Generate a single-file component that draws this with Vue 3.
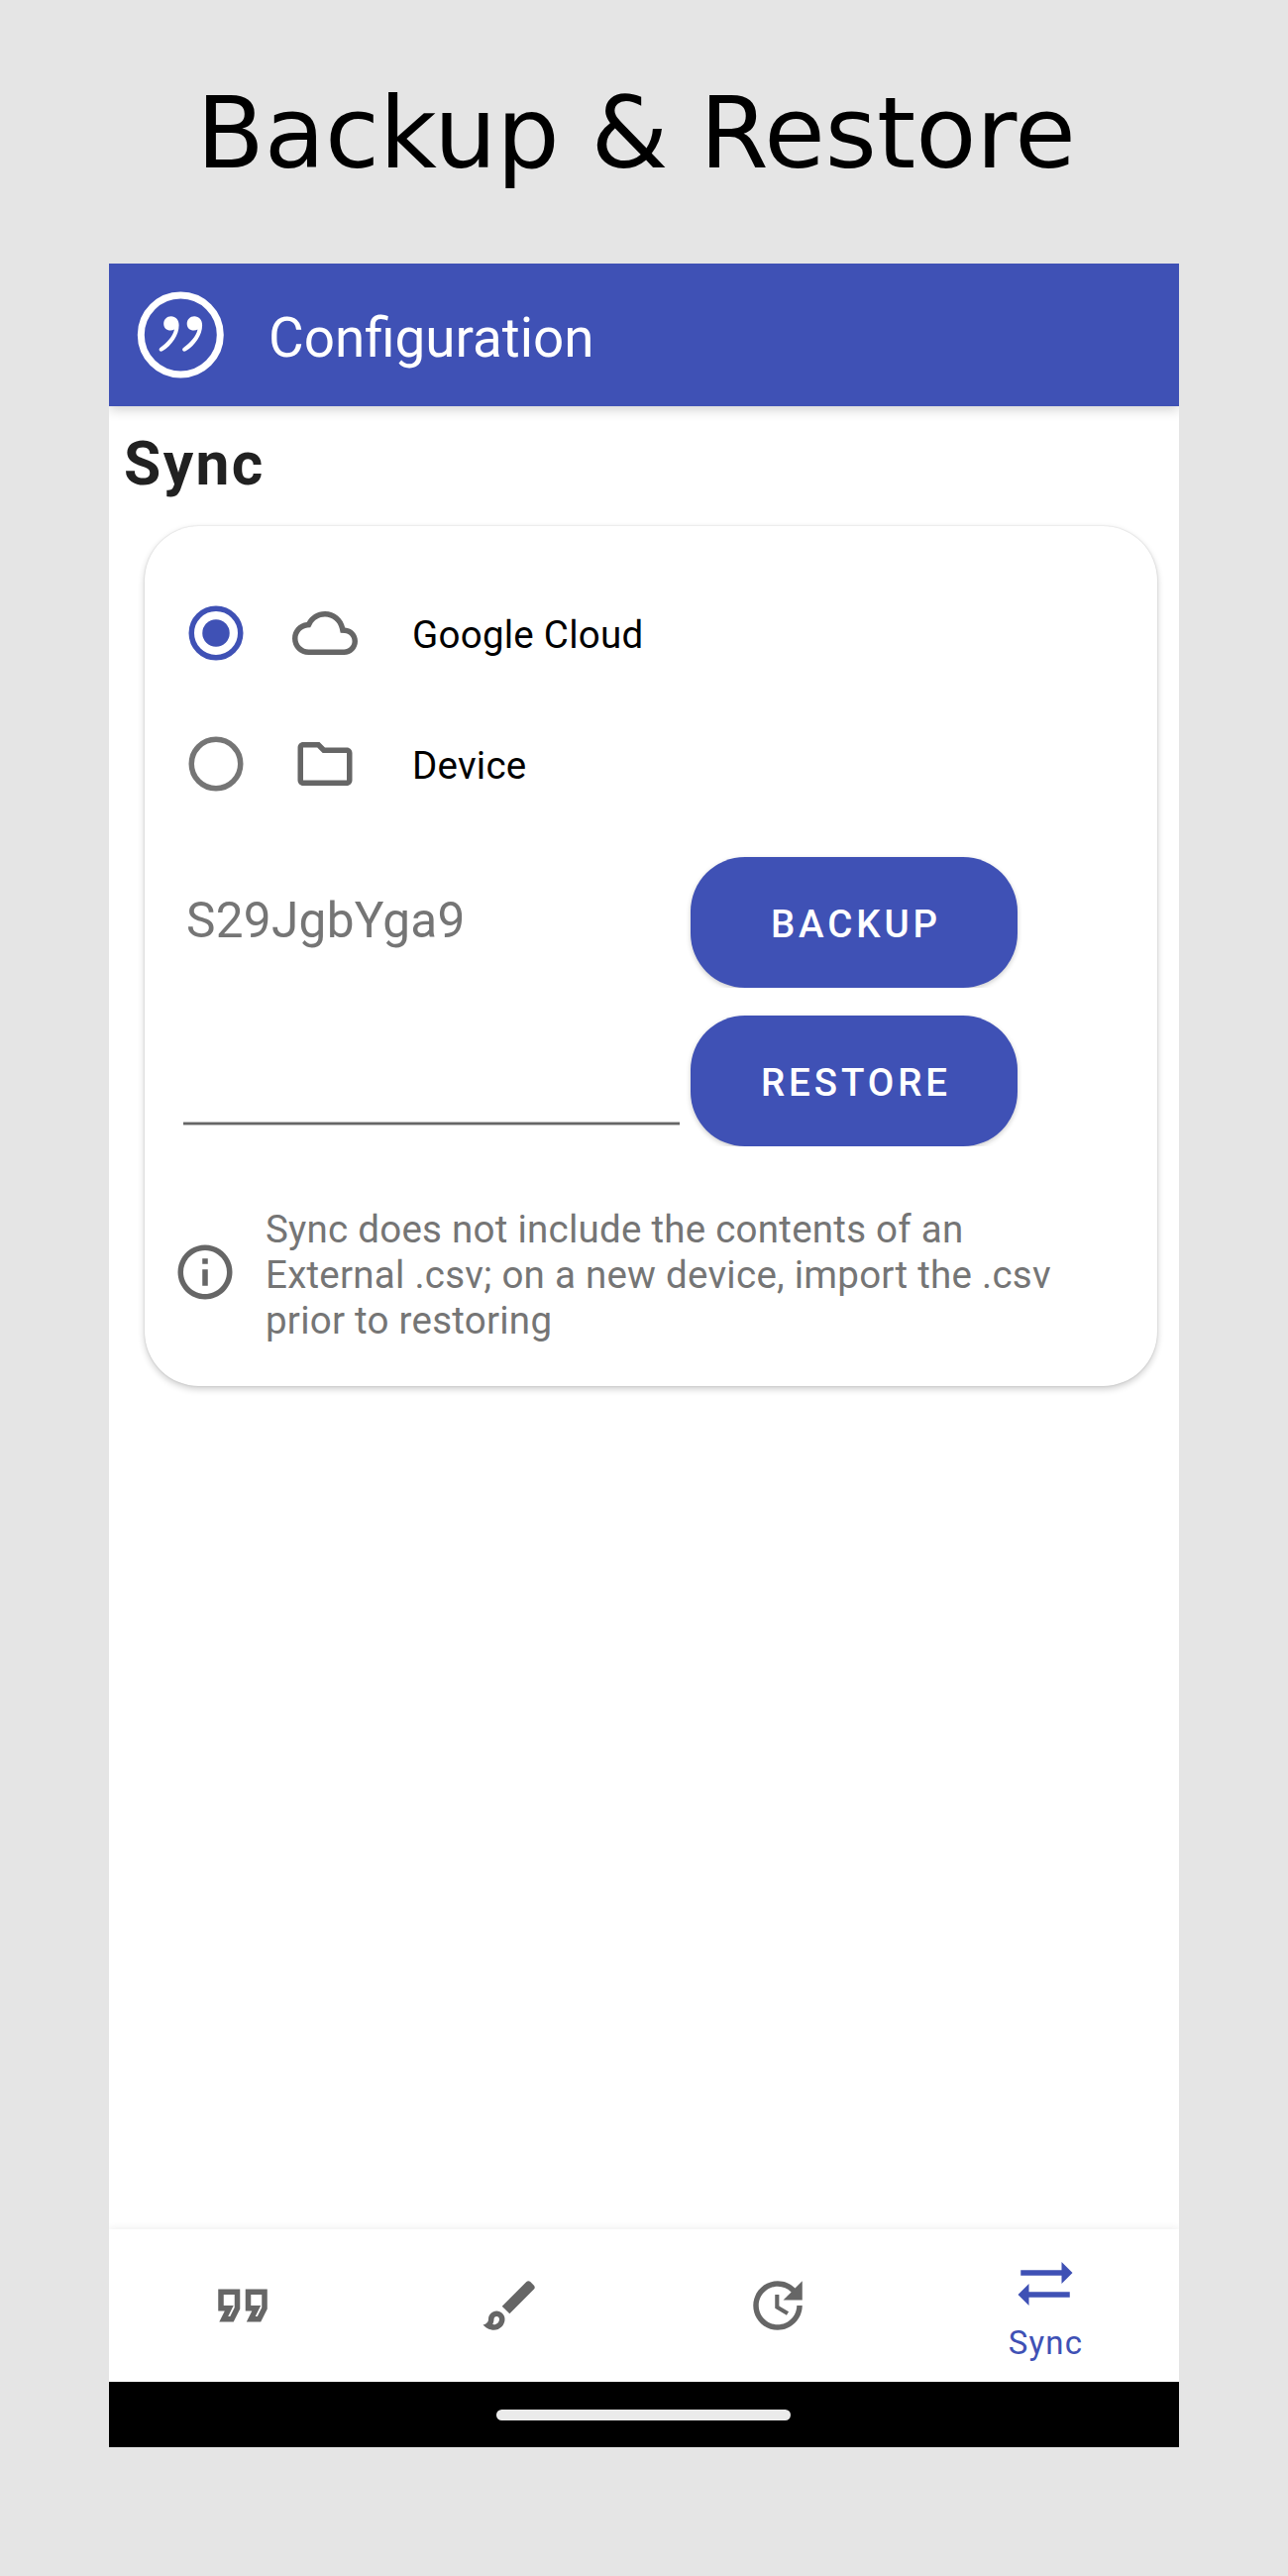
<script setup>
import { ref } from 'vue'

const target = ref('cloud')
const options = [
  {
    id: 'cloud',
    label: 'Google Cloud',
    icon: 'M19.35 10.04C18.67 6.59 15.64 4 12 4 9.11 4 6.6 5.64 5.35 8.04 2.34 8.36 0 10.91 0 14c0 3.31 2.69 6 6 6h13c2.76 0 5-2.24 5-5 0-2.64-2.05-4.78-4.65-4.96zM19 18H6c-2.21 0-4-1.79-4-4 0-2.05 1.53-3.76 3.56-3.97l1.07-.11.5-.95C8.08 7.14 9.94 6 12 6c2.62 0 4.88 1.86 5.39 4.43l.3 1.5 1.53.11c1.56.1 2.78 1.41 2.78 2.96 0 1.65-1.35 3-3 3z'
  },
  {
    id: 'device',
    label: 'Device',
    icon: 'M9.17 6l2 2H20v10H4V6h5.17M10 4H4c-1.1 0-1.99.9-1.99 2L2 18c0 1.1.9 2 2 2h16c1.1 0 2-.9 2-2V8c0-1.1-.9-2-2-2h-8l-2-2z'
  }
]

const tabs = [
  {
    id: 'quotes',
    icon: 'M18.62 18h-5.24l2-4H13V6h8v7.24L18.62 18zm-2-2h.76L19 12.76V8h-4v4h3.62l-2 4zm-8 2H3.38l2-4H3V6h8v7.24L8.62 18zm-2-2h.76L9 12.76V8H5v4h3.62l-2 4z'
  },
  {
    id: 'appearance',
    icon: 'M7 16c.55 0 1 .45 1 1 0 1.1-.9 2-2 2-.17 0-.33-.02-.5-.05.31-.55.5-1.21.5-1.95 0-.55.45-1 1-1M18.67 3c-.26 0-.51.1-.71.29L9 12.25 11.75 15l8.96-8.96c.39-.39.39-1.02 0-1.41l-1.34-1.34c-.2-.2-.45-.29-.7-.29zM7 14c-1.66 0-3 1.34-3 3 0 1.31-1.16 2-2 2 .92 1.22 2.49 2 4 2 2.21 0 4-1.79 4-4 0-1.66-1.34-3-3-3z'
  },
  {
    id: 'schedule',
    icon: 'M11 8v5l4.25 2.52.77-1.28-3.52-2.09V8zm10 2V3l-2.64 2.64C16.74 4.01 14.49 3 12 3c-4.97 0-9 4.03-9 9s4.03 9 9 9 9-4.03 9-9h-2c0 3.86-3.14 7-7 7s-7-3.14-7-7 3.14-7 7-7c1.93 0 3.68.79 4.95 2.05L14 10h7z'
  },
  {
    id: 'sync',
    label: 'Sync',
    icon: 'M22 8l-4-4v3H3v2h15v3l4-4zM2 16l4 4v-3h15v-2H6v-3l-4 4z'
  }
]

const mark =
  'M52.6 39.2c4.8 0 8 3.6 8 9 0 10-7 20.2-16.6 26-2.8 1.5-4.6-1.3-2.4-3.1C48.5 66 54.4 60 56 52.6c-1.2.7-2.4 1-3.8 1-4.2 0-7-3-7-6.9 0-4.3 3.2-7.5 7.4-7.5z'
</script>

<template>
  <div class="page">
    <h1 class="title">Backup &amp; Restore</h1>
    <div class="phone">
      <header class="appbar">
        <svg class="logo" viewBox="14 10 96 96">
          <circle cx="62.3" cy="58" r="40" fill="none" stroke="#fff" stroke-width="7" />
          <path fill="#fff" :d="mark" />
          <path fill="#fff" transform="translate(23.5 0)" :d="mark" />
        </svg>
        <span class="appbar-title">Configuration</span>
      </header>

      <main class="content">
        <h2 class="section">Sync</h2>
        <section class="card">
          <label v-for="o in options" :key="o.id" class="option" @click="target = o.id">
            <svg class="icon radio" :class="{ on: target === o.id }" viewBox="0 0 24 24">
              <circle cx="12" cy="12" r="9" fill="none" stroke="currentColor" stroke-width="2" />
              <circle v-if="target === o.id" cx="12" cy="12" r="5" fill="currentColor" />
            </svg>
            <svg class="icon kind" viewBox="0 0 24 24"><path :d="o.icon" /></svg>
            <span class="option-label">{{ o.label }}</span>
          </label>

          <div class="transfer">
            <div class="fields">
              <div class="code">S29JgbYga9</div>
              <div class="input"></div>
            </div>
            <div class="buttons">
              <button class="btn">BACKUP</button>
              <button class="btn">RESTORE</button>
            </div>
          </div>

          <div class="note">
            <svg class="icon" viewBox="0 0 24 24">
              <path d="M11 7h2v2h-2zm0 4h2v6h-2zm1-9C6.48 2 2 6.48 2 12s4.48 10 10 10 10-4.48 10-10S17.52 2 12 2zm0 18c-4.41 0-8-3.59-8-8s3.59-8 8-8 8 3.59 8 8-3.59 8-8 8z" />
            </svg>
            <p class="note-text">
              Sync does not include the contents of an<br />External .csv; on a new device, import the .csv<br />prior to restoring
            </p>
          </div>
        </section>
      </main>

      <nav class="tabs">
        <a v-for="t in tabs" :key="t.id" class="tab" :class="{ active: t.label }">
          <svg class="icon" viewBox="0 0 24 24"><path :d="t.icon" /></svg>
          <span v-if="t.label" class="tab-label">{{ t.label }}</span>
        </a>
      </nav>
      <div class="gesture"><div class="pill"></div></div>
    </div>
  </div>
</template>

<style>
body {
  background: #e5e5e5;
}
</style>

<style scoped>
.page {
  width: 1300px;
  height: 2600px;
  background: #e5e5e5;
  display: flex;
  flex-direction: column;
  align-items: center;
  font-family: Roboto, "Liberation Sans", sans-serif;
}
.title {
  margin: 0;
  height: 266px;
  box-sizing: border-box;
  padding: 3px 16px 0 0;
  font: 400 100px/263px "DejaVu Sans", sans-serif;
  color: #000;
  white-space: nowrap;
}
.phone {
  width: 1080px;
  height: 2204px;
  background: #fff;
  display: flex;
  flex-direction: column;
  overflow: hidden;
}
.appbar {
  height: 144px;
  flex: none;
  background: #3f51b5;
  display: flex;
  align-items: center;
  box-shadow: 0 4px 11px rgba(0, 0, 0, 0.17);
}
.logo {
  width: 96px;
  height: 96px;
  margin-left: 24px;
}
.appbar-title {
  margin-left: 41px;
  padding-top: 6px;
  font-size: 54.8px;
  line-height: 64px;
  color: #fff;
}
.content {
  flex: 1;
}
.section {
  margin: 0;
  height: 121px;
  padding-left: 15px;
  font-size: 60.5px;
  font-weight: 700;
  line-height: 117px;
  letter-spacing: 2.4px;
  color: #212121;
}
.card {
  width: 1022px;
  height: 868px;
  margin-left: 36px;
  box-sizing: border-box;
  padding-top: 42px;
  border-radius: 55px;
  background: #fff;
  box-shadow: 0 0 2px rgba(0, 0, 0, 0.16), 0 3px 7px rgba(0, 0, 0, 0.2);
}
.icon {
  width: 66px;
  height: 66px;
  flex: none;
  display: block;
  fill: #666;
}
.option {
  height: 132px;
  display: flex;
  align-items: center;
}
.radio {
  margin-left: 39px;
  color: #757575;
}
.radio.on {
  color: #3f51b5;
}
.kind {
  margin-left: 44px;
}
.option-label {
  margin-left: 55px;
  padding-top: 4px;
  font-size: 38.5px;
  line-height: 46px;
  letter-spacing: 0.25px;
  color: #000;
}
.transfer {
  display: flex;
  padding: 28px 0 0 39px;
  height: 292px;
}
.fields {
  width: 501px;
  margin-right: 11px;
}
.code {
  height: 160px;
  padding-left: 3px;
  font-size: 49.5px;
  line-height: 128px;
  letter-spacing: 0.3px;
  color: #757575;
  box-sizing: border-box;
}
.input {
  height: 111px;
  background: linear-gradient(#bdbdbd 0 1px, #666 1px 3px, #bdbdbd 3px 4px) bottom / 100% 4px no-repeat;
}
.buttons {
  display: flex;
  flex-direction: column;
  gap: 28px;
}
.btn {
  width: 330px;
  height: 132px;
  padding: 4px 0 0 4px;
  border: 0;
  border-radius: 55px;
  background: #3f51b5;
  color: #fff;
  font: 500 38.5px/46px Roboto, sans-serif;
  letter-spacing: 3.9px;
  box-shadow: 0 2px 5px rgba(0, 0, 0, 0.2);
  clip-path: inset(-8px -8px 0 -8px);
}
.note {
  display: flex;
  align-items: center;
  margin-top: 58px;
  padding-left: 28px;
}
.note .icon {
  margin-bottom: 3px;
}
.note-text {
  margin: 3px 0 0 28px;
  font-size: 38.5px;
  line-height: 46px;
  letter-spacing: 0.25px;
  color: #757575;
  white-space: nowrap;
}
.tabs {
  height: 154px;
  flex: none;
  display: flex;
  background: #fff;
  box-shadow: 0 0 8px rgba(0, 0, 0, 0.09);
}
.tab {
  flex: 1;
  display: flex;
  flex-direction: column;
  align-items: center;
  justify-content: center;
}
.tab.active {
  justify-content: flex-start;
  padding-top: 22px;
}
.tab.active .icon {
  fill: #3f51b5;
}
.tab-label {
  padding: 5px 0 0 1px;
  font-size: 33px;
  line-height: 44px;
  letter-spacing: 1.2px;
  color: #3f51b5;
}
.gesture {
  height: 66px;
  flex: none;
  background: #000;
  display: flex;
  align-items: center;
  justify-content: center;
  padding-right: 1px;
}
.pill {
  width: 297px;
  height: 11px;
  border-radius: 6px;
  background: #ebebeb;
}
</style>
